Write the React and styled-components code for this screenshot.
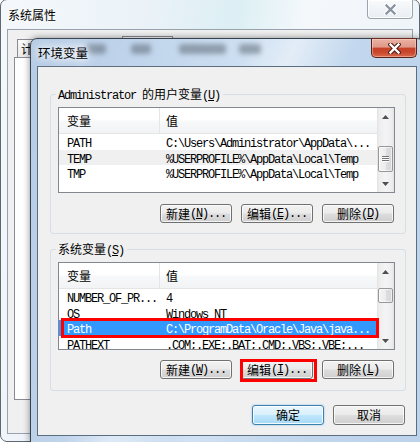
import React from "react";
import styled, { createGlobalStyle, css } from "styled-components";

const CJK = `"Noto Sans CJK SC", "Noto Sans", sans-serif`;
const MONO = `"Liberation Mono", "DejaVu Sans Mono", monospace`;

const GlobalStyle = createGlobalStyle`
  * { box-sizing: border-box; }
  html, body { margin: 0; padding: 0; background: #fff; }
  body {
    width: 420px; height: 442px; overflow: hidden;
    font-family: ${CJK}; font-size: 12px; color: #000;
  }
  #root { position: relative; width: 420px; height: 442px; overflow: hidden; }
`;

const Desktop = styled.div`
  position: relative;
  width: 420px;
  height: 442px;
  overflow: hidden;
`;

const Latin = styled.span`
  font-family: ${MONO};
  font-size: 12px;
  letter-spacing: -1.2px;
`;

/* ---------- back window (系统属性) ---------- */

const BackWindow = styled.div`
  position: absolute;
  left: 0;
  top: -1px;
  width: 420px;
  height: 443px;
  border: 1px solid #5f6870;
  border-radius: 7px;
  background: linear-gradient(100deg, #f5f8fb 0%, #eaf2f8 30%, #dceff4 48%, #f4f8fb 62%, #ecf2f8 100%);
  padding: 0 6px 7px 6px;
  display: flex;
  flex-direction: column;
`;

const BackTitleBar = styled.div`
  height: 29px;
  flex: none;
  margin: 0 -6px;
  padding-left: 7px;
  display: flex;
  align-items: flex-start;
`;

const BackTitle = styled.span`
  font-size: 12px;
  line-height: 29px;
  text-shadow: 0 0 6px #fff, 0 0 10px #fff;
`;

const BackClose = styled.div`
  margin: 0 6px 0 auto;
  width: 46px;
  height: 19px;
  border: 1px solid #9aa4ae;
  border-top: none;
  border-radius: 0 0 4px 4px;
  background: linear-gradient(#f8fafc, #e9eef3);
  box-shadow: inset 0 0 0 1px rgba(255, 255, 255, 0.8);
  display: flex;
  align-items: center;
  justify-content: center;
`;

const BackClient = styled.div`
  height: 405px;
  flex: none;
  border: 1px solid #97a2ad;
  background: #f0f0f0;
  padding: 6px 0 0 6px;
`;

const TabStrip = styled.div`
  height: 21px;
  display: flex;
  align-items: flex-end;
  padding-left: 3px;
`;

const Tab = styled.div`
  width: ${(p) => p.$w}px;
  height: ${(p) => (p.$active ? 21 : 18)}px;
  flex: none;
  border: 1px solid #898c95;
  border-bottom: none;
  border-left-width: ${(p) => (p.$first || p.$active ? 1 : 0)}px;
  border-right-width: ${(p) => (p.$beforeActive ? 0 : 1)}px;
  background: ${(p) => (p.$active ? "#fff" : "linear-gradient(#fbfbfb, #eaeaea)")};
  padding-left: 3px;
  font-size: 12px;
  line-height: ${(p) => (p.$active ? 20 : 17)}px;
  white-space: nowrap;
  overflow: hidden;
`;

const TabPanel = styled.div`
  width: 393px;
  height: 343px;
  border: 1px solid #898c95;
  background: #fff;
`;

/* ---------- front window (环境变量) ---------- */

const FrontWindow = styled.section`
  position: absolute;
  left: 30px;
  top: 38px;
  width: 394px;
  height: 406px;
  border: 1px solid #34414e;
  border-radius: 7px 7px 0 0;
  background:
    linear-gradient(115deg, rgba(255,255,255,0) 38%, rgba(255,255,255,0.45) 46%, rgba(255,255,255,0) 56%),
    linear-gradient(100deg, #b6cce5 0%, #c3d7ed 30%, #d0e1f2 50%, #c0d6ed 75%, #bcd3eb 100%);
  box-shadow: 0 0 7px rgba(0, 0, 0, 0.45);
  display: flex;
  flex-direction: column;
`;

const TitleBar = styled.header`
  position: relative;
  height: 27px;
  flex: none;
  display: flex;
  align-items: flex-start;
`;

/* blurred shapes of the window behind, seen through the glass */
const Glass = styled.div`
  position: absolute;
  inset: 0;
  overflow: hidden;
  pointer-events: none;
  display: flex;
  align-items: flex-start;
  padding-top: 5px;
  filter: blur(2.4px);
  opacity: 0.5;
`;

const GlassBlob = styled.span`
  flex: none;
  margin-left: ${(p) => p.$ml}px;
  width: ${(p) => p.$w}px;
  height: 10px;
  border-radius: 3px;
  background: #55606c;
`;

const TitleText = styled.h1`
  position: relative;
  margin: 0;
  padding-left: 7px;
  font-family: ${CJK};
  font-weight: normal;
  font-size: 12.5px;
  line-height: 27px;
  text-shadow: 0 0 6px #fff, 0 0 10px #fff, 0 0 14px #fff;
`;

const CloseButton = styled.div`
  position: relative;
  margin: -1px 6px 0 auto;
  width: 46px;
  height: 20px;
  border: 1px solid #5a2217;
  border-top-color: #6b2b20;
  border-radius: 0 0 5px 5px;
  background: linear-gradient(#eab2a3 0%, #e0998a 44%, #c6432a 52%, #c8462c 72%, #d9694b 100%);
  box-shadow: inset 0 0 0 1px rgba(255, 220, 210, 0.45);
  display: flex;
  align-items: center;
  justify-content: center;
`;

const Client = styled.div`
  margin: 0 6px;
  height: 370px;
  flex: none;
  border: 1px solid #5c6d80;
  background: #f0f0f0;
  display: flex;
  flex-direction: column;
`;

const Group = styled.fieldset`
  margin: ${(p) => p.$mt}px 0 0 12px;
  width: 356px;
  min-width: 0;
  padding: 7px 10px ${(p) => p.$pb}px 7px;
  border: 1px solid #d5dfe5;
  border-radius: 3px;
`;

const GroupLegend = styled.legend`
  display: block;
  height: 12px;
  margin-left: -2px;
  padding: 0 3px 0 2px;
  font-size: 12px;
  line-height: 12px;
  white-space: nowrap;
`;

/* list view */

const ListBox = styled.div`
  display: flex;
  height: ${(p) => p.$h}px;
  border: 1px solid #828790;
  background: #fff;
`;

const ListMain = styled.div`
  flex: 1;
  min-width: 0;
  display: flex;
  flex-direction: column;
  overflow-x: visible;
  overflow-y: clip;
`;

const HeaderRow = styled.div`
  display: grid;
  grid-template-columns: 101px 1fr;
  height: 26px;
  flex: none;
  border-bottom: 1px solid #e5e5e5;
  background: linear-gradient(#ffffff 0%, #ffffff 45%, #f7f8f9 55%, #f2f3f5 100%);
`;

const HeaderCell = styled.div`
  padding-left: ${(p) => (p.$first ? 8 : 6)}px;
  font-size: 12px;
  line-height: 25px;
  border-right: ${(p) => (p.$first ? "1px solid #e5e5e5" : "none")};
`;

const Row = styled.div`
  position: relative;
  display: grid;
  grid-template-columns: 101px 1fr;
  height: 15.5px;
  flex: none;
  line-height: 15.5px;
  white-space: nowrap;
  ${(p) =>
    p.$state === "selected" &&
    css`
      background: #3399ff;
      color: #fff;
    `}
  ${(p) =>
    p.$state === "inactive" &&
    css`
      background: #f0f0f0;
    `}
  ${(p) =>
    p.$marked &&
    css`
      &::after {
        content: "";
        position: absolute;
        left: 2px;
        right: -2px;
        top: -2px;
        bottom: -2px;
        border: 3px solid #ff0000;
      }
    `}
`;

const Cell = styled.div`
  padding-left: ${(p) => (p.$first ? 8 : 6)}px;
  overflow: hidden;
`;

const ScrollBar = styled.div`
  width: 17px;
  flex: none;
  display: flex;
  flex-direction: column;
  background: linear-gradient(to right, #e2e2e2 0, #ededed 2px, #f4f4f4 50%, #ededed 15px, #e2e2e2 100%);
`;

const ArrowBox = styled.div`
  height: 17px;
  flex: none;
  display: flex;
  align-items: center;
  justify-content: center;
`;

const Track = styled.div`
  flex: 1;
  display: flex;
  flex-direction: column;
`;

const Thumb = styled.div`
  margin: ${(p) => p.$top}px 1px 0 1px;
  height: ${(p) => p.$h}px;
  flex: none;
  border: 1px solid #979797;
  border-radius: 2px;
  background: linear-gradient(to right, #f4f4f4 0%, #ececec 50%, #dedede 51%, #d6d6d6 100%);
  box-shadow: inset 0 0 0 1px rgba(255, 255, 255, 0.6);
  display: flex;
  align-items: center;
  justify-content: center;
`;

/* buttons */

const ButtonRow = styled.div`
  display: flex;
  justify-content: flex-end;
  gap: 9px;
  margin-top: ${(p) => p.$mt}px;
  padding-right: ${(p) => p.$pr}px;
`;

const Button = styled.button`
  position: relative;
  width: 72px;
  height: ${(p) => p.$h || 19}px;
  padding: 0;
  margin: 0;
  border: 1px solid #707070;
  border-radius: 3px;
  background: linear-gradient(#f2f2f2 0%, #ebebeb 48%, #dddddd 52%, #cfcfcf 100%);
  box-shadow: inset 0 0 0 1px rgba(255, 255, 255, 0.75);
  font-family: ${CJK};
  font-size: 12px;
  line-height: 12px;
  color: #000;
  white-space: nowrap;
  display: flex;
  align-items: center;
  justify-content: center;
  ${(p) =>
    p.$default &&
    css`
      border-color: #3c7fb1;
      background: linear-gradient(#eaf6fd 0%, #d9f0fc 48%, #bee6fd 52%, #a7d9f5 100%);
      box-shadow: inset 0 0 0 1px rgba(255, 255, 255, 0.85), 0 0 2px rgba(60, 160, 230, 0.6);
    `}
  ${(p) =>
    p.$marked &&
    css`
      &::after {
        content: "";
        position: absolute;
        left: -2px;
        right: -5px;
        top: -2px;
        bottom: -4px;
        border: 3px solid #ff0000;
      }
    `}
`;

/* ---------- icons ---------- */

const CloseGlyph = ({ dark }) =>
  dark ? (
    <svg width="13" height="11" viewBox="0 0 13 11">
      <path d="M2.5 1.5 L10.5 9.5 M10.5 1.5 L2.5 9.5" stroke="#4a1a12" strokeWidth="4.4" strokeLinecap="square" />
      <path d="M2.5 1.5 L10.5 9.5 M10.5 1.5 L2.5 9.5" stroke="#fff" strokeWidth="2.4" strokeLinecap="square" />
    </svg>
  ) : (
    <svg width="13" height="11" viewBox="0 0 13 11">
      <path d="M2.5 1.5 L10.5 9.5 M10.5 1.5 L2.5 9.5" stroke="#ffffff" strokeWidth="4.2" strokeLinecap="square" />
      <path d="M2.5 1.5 L10.5 9.5 M10.5 1.5 L2.5 9.5" stroke="#8893a0" strokeWidth="2.3" strokeLinecap="square" />
    </svg>
  );

const Arrow = ({ dir }) => (
  <svg width="7" height="4" viewBox="0 0 7 4">
    <path d={dir === "up" ? "M3.5 0 L7 4 L0 4 Z" : "M0 0 L7 0 L3.5 4 Z"} fill="#4f4f4f" />
  </svg>
);

const Grip = () => (
  <svg width="7" height="6" viewBox="0 0 7 6">
    {[0, 2, 4].map((y) => (
      <g key={y}>
        <rect x="0" y={y} width="7" height="1" fill="#727272" />
        <rect x="0" y={y + 1} width="7" height="1" fill="#ffffff" />
      </g>
    ))}
  </svg>
);

/* ---------- data ---------- */

const backTabs = [
  { label: "计算机名", w: 61 },
  { label: "硬件", w: 44 },
  { label: "高级", w: 51, active: true },
  { label: "系统保护", w: 62 },
  { label: "远程", w: 44 },
];

/* blurred tab labels behind the glass: [gap before, width] */
const glassBlobs = [
  [55, 20],
  [25, 20],
  [28, 47],
  [13, 22],
];

const userVars = [
  { name: "PATH", value: "C:\\Users\\Administrator\\AppData\\..." },
  { name: "TEMP", value: "%USERPROFILE%\\AppData\\Local\\Temp", state: "inactive" },
  { name: "TMP", value: "%USERPROFILE%\\AppData\\Local\\Temp" },
];

const sysVars = [
  { name: "NUMBER_OF_PR...", value: "4" },
  { name: "OS", value: "Windows_NT" },
  { name: "Path", value: "C:\\ProgramData\\Oracle\\Java\\java...", state: "selected", marked: true },
  { name: "PATHEXT", value: ".COM;.EXE;.BAT;.CMD;.VBS;.VBE;..." },
];

/* ---------- composed parts ---------- */

const BackTabs = () => (
  <TabStrip>
    {backTabs.map((t, i) => (
      <Tab
        key={t.label}
        $w={t.w}
        $active={t.active}
        $first={i === 0}
        $beforeActive={backTabs[i + 1] && backTabs[i + 1].active}
      >
        {t.label}
      </Tab>
    ))}
  </TabStrip>
);

const ListView = ({ rows, height, thumb }) => (
  <ListBox $h={height}>
    <ListMain>
      <HeaderRow>
        <HeaderCell $first>变量</HeaderCell>
        <HeaderCell>值</HeaderCell>
      </HeaderRow>
      {rows.map((r) => (
        <Row key={r.name} $state={r.state} $marked={r.marked}>
          <Cell $first>
            <Latin>{r.name}</Latin>
          </Cell>
          <Cell>
            <Latin>{r.value}</Latin>
          </Cell>
        </Row>
      ))}
    </ListMain>
    <ScrollBar>
      <ArrowBox>
        <Arrow dir="up" />
      </ArrowBox>
      <Track>
        <Thumb $top={thumb.top} $h={thumb.h}>
          {thumb.grip && <Grip />}
        </Thumb>
      </Track>
      <ArrowBox>
        <Arrow dir="down" />
      </ArrowBox>
    </ScrollBar>
  </ListBox>
);

const Label = ({ zh, tail, keyChar }) => (
  <>
    {zh}
    <Latin>
      (<u>{keyChar}</u>){tail}
    </Latin>
  </>
);

export default function App() {
  return (
    <Desktop>
      <GlobalStyle />

      <BackWindow>
        <BackTitleBar>
          <BackTitle>系统属性</BackTitle>
          <BackClose>
            <CloseGlyph />
          </BackClose>
        </BackTitleBar>
        <BackClient>
          <BackTabs />
          <TabPanel />
        </BackClient>
      </BackWindow>

      <FrontWindow>
        <TitleBar>
          <Glass>
            {glassBlobs.map(([ml, w], i) => (
              <GlassBlob key={i} $ml={ml} $w={w} />
            ))}
          </Glass>
          <TitleText>环境变量</TitleText>
          <CloseButton>
            <CloseGlyph dark />
          </CloseButton>
        </TitleBar>

        <Client>
          <Group $mt={21} $pb={10}>
            <GroupLegend>
              <Latin>Administrator </Latin>的用户变量<Latin>(<u>U</u>)</Latin>
            </GroupLegend>
            <ListView rows={userVars} height={86} thumb={{ top: 21, h: 26, grip: true }} />
            <ButtonRow $mt={11} $pr={1}>
              <Button>
                <Label zh="新建" keyChar="N" tail="..." />
              </Button>
              <Button>
                <Label zh="编辑" keyChar="E" tail="..." />
              </Button>
              <Button>
                <Label zh="删除" keyChar="D" tail="" />
              </Button>
            </ButtonRow>
          </Group>

          <Group $mt={9} $pb={11}>
            <GroupLegend>
              系统变量<Latin>(<u>S</u>)</Latin>
            </GroupLegend>
            <ListView rows={sysVars} height={88} thumb={{ top: 8, h: 15 }} />
            <ButtonRow $mt={10} $pr={1}>
              <Button>
                <Label zh="新建" keyChar="W" tail="..." />
              </Button>
              <Button $marked>
                <Label zh="编辑" keyChar="I" tail="..." />
              </Button>
              <Button>
                <Label zh="删除" keyChar="L" tail="" />
              </Button>
            </ButtonRow>
          </Group>

          <ButtonRow $mt={14} $pr={11}>
            <Button $default $h={20}>确定</Button>
            <Button $h={20}>取消</Button>
          </ButtonRow>
        </Client>
      </FrontWindow>
    </Desktop>
  );
}
